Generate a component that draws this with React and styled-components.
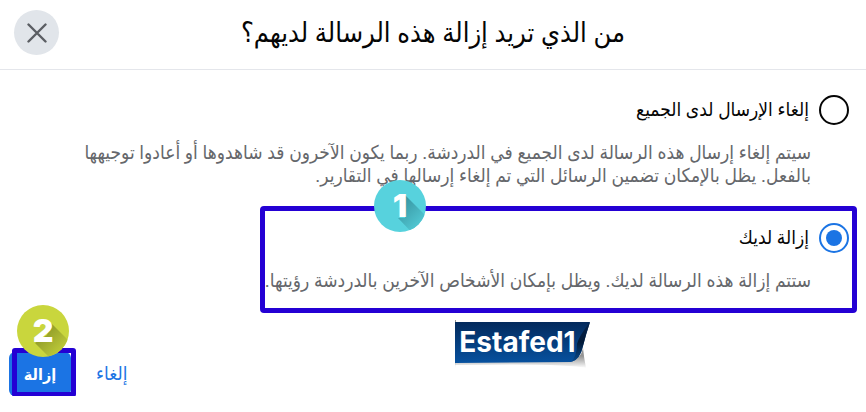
import React, { useState } from 'react';
import styled, { createGlobalStyle } from 'styled-components';

const COLORS = {
  black: '#050505',
  gray: '#65676b',
  line: '#e4e6eb',
  closeBg: '#e1e5ea',
  blue: '#1b74e4',
  outline: '#2400d4',
  white: '#ffffff',
};

export default function App() {
  const [choice, setChoice] = useState('self');
  const pick = event => setChoice(event.target.value);

  return (
    <>
      <GlobalStyle />
      <Dialog dir="rtl" role="dialog" aria-labelledby="dialog-title">
        <Header>
          <Title id="dialog-title">من الذي تريد إزالة هذه الرسالة لديهم؟</Title>
          <CloseButton type="button" aria-label="إغلاق">
            <CloseIcon />
          </CloseButton>
        </Header>

        <Options>
          <Option>
            <OptionLabel>
              <Radio name="scope" value="all" checked={choice === 'all'} onChange={pick} />
              <OptionTitle>إلغاء الإرسال لدى الجميع</OptionTitle>
            </OptionLabel>
            <Description>
              سيتم إلغاء إرسال هذه الرسالة لدى الجميع في الدردشة. ربما يكون الآخرون قد شاهدوها أو أعادوا توجيهها
              <br />
              بالفعل. يظل بالإمكان تضمين الرسائل التي تم إلغاء إرسالها في التقارير.
            </Description>
          </Option>

          <OutlinedOption>
            <OptionLabel>
              <Radio name="scope" value="self" checked={choice === 'self'} onChange={pick} />
              <OptionTitle>إزالة لديك</OptionTitle>
            </OptionLabel>
            <Description>ستتم إزالة هذه الرسالة لديك. ويظل بإمكان الأشخاص الآخرين بالدردشة رؤيتها.</Description>
            <FirstStep>
              <StepBadge number="1" color="#57d2dd" shade="#3a9aa6" />
            </FirstStep>
          </OutlinedOption>
        </Options>

        <Footer>
          <Brand>
            <BrandRibbon />
            <BrandName>Estafed1</BrandName>
          </Brand>
          <Actions>
            <CancelButton type="button">إلغاء</CancelButton>
            <RemoveArea>
              <RemoveButton type="button">إزالة</RemoveButton>
              <RemoveOutline />
              <SecondStep>
                <StepBadge number="2" color="#c9d63d" shade="#8f9a28" />
              </SecondStep>
            </RemoveArea>
          </Actions>
        </Footer>
      </Dialog>
    </>
  );
}

function CloseIcon() {
  return (
    <svg width="20" height="20" viewBox="0 0 20 20" aria-hidden="true">
      <path d="M1.5 1.5l17 17M18.5 1.5l-17 17" stroke="#5b5e63" strokeWidth="2.4" strokeLinecap="round" />
    </svg>
  );
}

function StepBadge({ number, color, shade }) {
  const id = `badge-${number}`;

  return (
    <Badge>
      <BadgeArt viewBox="0 0 52 52" aria-hidden="true">
        <defs>
          <clipPath id={`${id}-clip`}>
            <circle cx="26" cy="26" r="26" />
          </clipPath>
          <linearGradient id={`${id}-shade`} gradientUnits="userSpaceOnUse" x1="26" y1="26" x2="50" y2="50">
            <stop offset="0" stopColor={shade} />
            <stop offset="1" stopColor={color} />
          </linearGradient>
        </defs>
        <circle cx="26" cy="26" r="26" fill={color} />
        <path
          d={number === '1' ? 'M31 15L62 46V60H45L24 38H31Z' : 'M34 18L62 46V60H40L18 38L30 30Z'}
          fill={`url(#${id}-shade)`}
          clipPath={`url(#${id}-clip)`}
        />
      </BadgeArt>
      <BadgeNumber>{number}</BadgeNumber>
    </Badge>
  );
}

function BrandRibbon() {
  return (
    <RibbonArt viewBox="0 0 136 50" aria-hidden="true">
      <defs>
        <linearGradient id="ribbon-fill" x1="0" y1="0" x2="0" y2="1">
          <stop offset="0" stopColor="#032a5c" />
          <stop offset="1" stopColor="#07519f" />
        </linearGradient>
        <linearGradient id="ribbon-fold" x1="0" y1="0" x2="0" y2="1">
          <stop offset="0" stopColor="#04244d" />
          <stop offset="0.5" stopColor="#021a38" />
          <stop offset="1" stopColor="#0b4a8c" />
        </linearGradient>
        <linearGradient id="ribbon-shadow" x1="0" y1="0" x2="0" y2="1">
          <stop offset="0.4" stopColor="#666666" stopOpacity="0.7" />
          <stop offset="1" stopColor="#666666" stopOpacity="0" />
        </linearGradient>
      </defs>
      <path d="M0 40H118Q126 38 128 28Q129 38 131 48Q112 43 0 45Z" fill="url(#ribbon-shadow)" />
      <path d="M0 0h1v48H0z" fill="url(#ribbon-shadow)" />
      <path d="M0 2H135Q131 14 128 26Q125 40 116 42L0 43Z" fill="url(#ribbon-fill)" />
      <path d="M135 2Q131 14 128 26Q125 40 116 42Q122 36 122 24Q124 16 135 2Z" fill="url(#ribbon-fold)" />
    </RibbonArt>
  );
}

const GlobalStyle = createGlobalStyle`
  * {
    box-sizing: border-box;
  }

  body {
    margin: 0;
    background: ${COLORS.white};
    font-family: Roboto, 'DejaVu Sans Condensed', 'DejaVu Sans', sans-serif;
  }

  button {
    font: inherit;
    cursor: pointer;
  }
`;

const Dialog = styled.main`
  color: ${COLORS.black};
  overflow: hidden;
`;

const Header = styled.header`
  display: grid;
  grid-template-columns: 1fr auto 1fr;
  align-items: center;
  padding: 10px 14px 14px;
  border-bottom: 1px solid ${COLORS.line};
`;

const Title = styled.h1`
  grid-column: 2;
  margin: 0;
  font-size: 27px;
  font-weight: 400;
  line-height: 36px;
  white-space: nowrap;
`;

const CloseButton = styled.button`
  display: grid;
  place-items: center;
  justify-self: end;
  width: 45px;
  height: 45px;
  padding: 0;
  border: 0;
  border-radius: 50%;
  background: ${COLORS.closeBg};
`;

const Options = styled.div`
  display: flex;
  flex-direction: column;
  gap: 19px;
  padding: 20px 9px 0;
`;

const Option = styled.section`
  position: relative;
  padding: 5px 8px 0;
`;

const OutlinedOption = styled(Option)`
  align-self: flex-start;
  width: 70.4%;
  padding: 12px 3px 16px;
  border: 5px solid ${COLORS.outline};
  border-radius: 4px;
`;

const OptionLabel = styled.label`
  display: flex;
  align-items: center;
  gap: 10px;
`;

const Radio = styled.input.attrs({ type: 'radio' })`
  appearance: none;
  display: grid;
  place-items: center;
  width: 30px;
  height: 30px;
  margin: 0;
  border: 2px solid ${COLORS.black};
  border-radius: 50%;

  &:checked {
    border-color: ${COLORS.blue};
  }

  &:checked::before {
    content: '';
    width: 16px;
    height: 16px;
    border-radius: 50%;
    background: ${COLORS.blue};
  }
`;

const OptionTitle = styled.span`
  font-size: 19px;
  line-height: 24px;
`;

const Description = styled.p`
  margin: 16px 0 0;
  padding-right: 38px;
  color: ${COLORS.gray};
  font-size: 19px;
  line-height: 23px;
  white-space: nowrap;
`;

const Badge = styled.span`
  position: relative;
  display: grid;
  place-items: center;
  width: 52px;
  height: 52px;
`;

const BadgeArt = styled.svg`
  position: absolute;
  inset: 0;
`;

const BadgeNumber = styled.span`
  position: relative;
  color: ${COLORS.white};
  font-family: Inter, sans-serif;
  font-size: 32px;
  font-weight: 900;
  line-height: 32px;
`;

const FirstStep = styled.span`
  position: absolute;
  top: -31px;
  left: 109px;
`;

const Footer = styled.footer`
  display: grid;
  grid-template-columns: 9fr 10fr;
  padding: 7px 9px 0;
`;

const Brand = styled.div`
  position: relative;
  justify-self: end;
  width: 136px;
  height: 50px;
`;

const RibbonArt = styled.svg`
  position: absolute;
  inset: 0;
`;

const BrandName = styled.strong`
  position: relative;
  display: block;
  padding: 6px 4px 0;
  color: ${COLORS.white};
  direction: ltr;
  font-family: Inter, sans-serif;
  font-size: 28px;
  font-weight: 700;
  line-height: 32px;
`;

const Actions = styled.div`
  display: flex;
  align-items: center;
  justify-content: flex-end;
  gap: 17px;
  padding-top: 32px;
`;

const CancelButton = styled.button`
  padding: 8px;
  border: 0;
  background: none;
  color: ${COLORS.blue};
  font-size: 19px;
  line-height: 24px;
`;

const RemoveArea = styled.div`
  position: relative;
`;

const RemoveButton = styled.button`
  width: 62px;
  height: 44px;
  padding: 0;
  border: 0;
  border-radius: 6px;
  background: ${COLORS.blue};
  color: ${COLORS.white};
  font-size: 16px;
  font-weight: 700;
`;

const RemoveOutline = styled.span`
  position: absolute;
  inset: -4px -5px -1px 3px;
  border: 5px solid ${COLORS.outline};
  border-radius: 3px;
  pointer-events: none;
`;

const SecondStep = styled.span`
  position: absolute;
  top: -47px;
  left: 8px;
  pointer-events: none;
`;
